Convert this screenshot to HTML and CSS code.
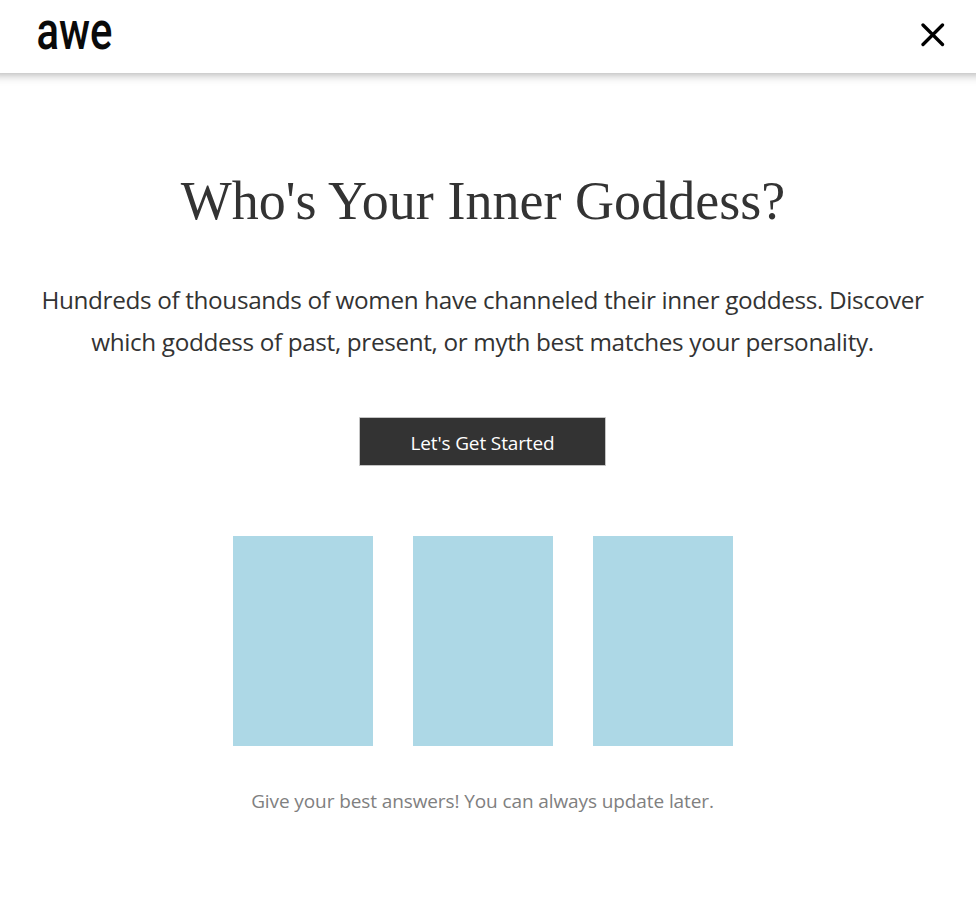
FILE: index.html
```html
<!DOCTYPE html>
<html lang="en">
<head>
<meta charset="utf-8">
<title>Who's Your Inner Goddess?</title>
<link rel="stylesheet" href="styles.css">
</head>
<body>
<header class="header">
  <svg class="logo" viewBox="0 0 76 32" role="img" aria-label="awe"><text class="logo-text" x="-0.5" y="29.5" textLength="76" lengthAdjust="spacingAndGlyphs">awe</text></svg>
  <button class="close" aria-label="Close"><svg viewBox="0 0 24 24"><path d="M2 2 21.5 21.5M21.5 2 2 21.5"/></svg></button>
</header>
<main class="main">
  <h1 class="title">Who's Your Inner Goddess?</h1>
  <p class="intro">Hundreds of thousands of women have channeled their inner goddess. Discover<br>which goddess of past, present, or myth best matches your personality.</p>
  <button class="start">Let's Get Started</button>
  <div class="cards">
    <div class="card"></div>
    <div class="card"></div>
    <div class="card"></div>
  </div>
  <p class="note">Give your best answers! You can always update later.</p>
</main>
</body>
</html>
```
FILE: styles.css
```css
* { box-sizing: border-box; }
body {
  margin: 0;
  background: #fff;
  color: #333;
  font-family: "Open Sans", sans-serif;
  overflow-x: hidden;
}
.header {
  display: flex;
  align-items: center;
  justify-content: space-between;
  height: 73px;
  padding: 0 31px 4px 37px;
  box-shadow: 0 -9px 10px 10px rgba(0, 0, 0, 0.35);
}
.logo { width: 76px; height: 32px; overflow: visible; }
.logo-text {
  font: 500 53px Roboto, sans-serif;
  fill: #0a0a0a;
}
.close { display: flex; padding: 0; border: 0; background: none; }
.close svg {
  width: 24px;
  height: 24px;
  fill: none;
  stroke: #000;
  stroke-width: 3.3;
  stroke-linecap: round;
}
.main {
  display: flex;
  flex-direction: column;
  align-items: center;
  width: 965px;
  padding-top: 98px;
  text-align: center;
}
.title {
  margin: 0;
  padding-left: 1px;
  font: 400 54px/60px "Liberation Serif", serif;
  letter-spacing: 0.04px;
  white-space: nowrap;
}
.intro {
  margin: 48px 0 0;
  font-size: 24.3px;
  line-height: 42px;
  letter-spacing: -0.35px;
  white-space: nowrap;
}
.start {
  width: 247px;
  height: 49px;
  margin-top: 54px;
  padding: 3px 0 0;
  border: 1px solid #c4c4c4;
  border-radius: 1px;
  background: #333;
  color: #fff;
  font: 400 19px "Open Sans", sans-serif;
  letter-spacing: -0.13px;
}
.cards { display: flex; gap: 40px; margin-top: 70px; }
.card { width: 140px; height: 210px; background: #add8e6; }
.note {
  margin: 42px 0 0;
  color: #808080;
  font-size: 19px;
  line-height: 26px;
  letter-spacing: -0.1px;
}
```
